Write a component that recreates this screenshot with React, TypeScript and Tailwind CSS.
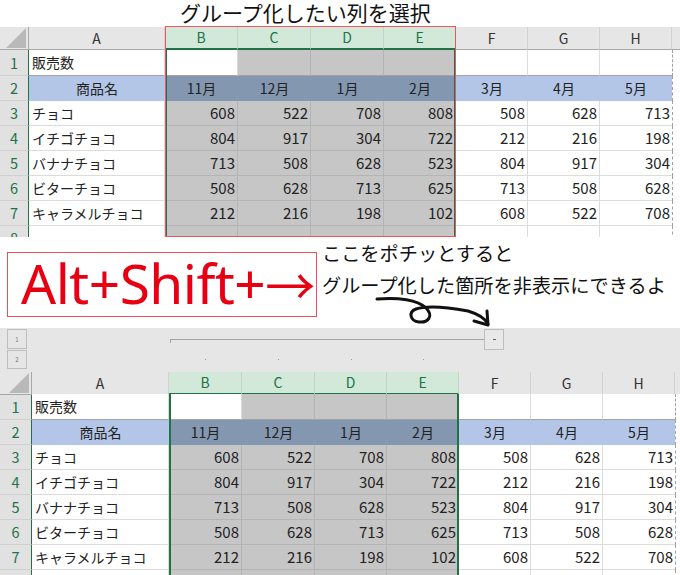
import React from "react";

// Two Excel-like sheets with a note about grouping columns in between.

const data: string[][] = [
  ["販売数", "", "", "", "", "", "", ""],
  ["商品名", "11月", "12月", "1月", "2月", "3月", "4月", "5月"],
  ["チョコ", "608", "522", "708", "808", "508", "628", "713"],
  ["イチゴチョコ", "804", "917", "304", "722", "212", "216", "198"],
  ["バナナチョコ", "713", "508", "628", "523", "804", "917", "304"],
  ["ビターチョコ", "508", "628", "713", "625", "713", "508", "628"],
  ["キャラメルチョコ", "212", "216", "198", "102", "608", "522", "708"],
  ["", "", "", "", "", "", "", ""],
];

const letters = ["A", "B", "C", "D", "E", "F", "G", "H"];

type SheetCfg = {
  cols: string;
  headH: string;
  rowH: string[];
  sel: string;
};

const sheet1: SheetCfg = {
  cols: "grid-cols-[29px_136px_73px_73px_73px_72px_72px_72px_72px_1fr]",
  headH: "h-[23px]",
  rowH: ["h-[26px]", "h-[25px]", "h-[25px]", "h-[25px]", "h-[25px]", "h-[25px]", "h-[25px]", "h-[11px]"],
  sel: "left-[165px] w-[291px] top-[23px]",
};

const sheet2: SheetCfg = {
  cols: "grid-cols-[32px_137px_73px_73px_72px_72px_72px_72px_72px_1fr]",
  headH: "h-[22px]",
  rowH: ["h-[26px]", "h-[25px]", "h-[25px]", "h-[25px]", "h-[25px]", "h-[25px]", "h-[25px]", "h-[5px]"],
  sel: "left-[169px] w-[290px] top-[22px]",
};

// cells keep their full height; the last row is clipped by its container
const cellH = ["h-[26px]", "h-[25px]", "h-[25px]", "h-[25px]", "h-[25px]", "h-[25px]", "h-[25px]", "h-[25px]"];

function cellClass(r: number, c: number) {
  const sel = c >= 1 && c <= 4;
  if (c === 8) return "bg-white border-l border-dashed border-[#a0a0a0]";
  const right = c === 7 ? "" : "border-r";
  if (r === 2) return sel ? "bg-[#8497b0]" : "bg-[#b4c6e7]";
  const bottom = r === 1 ? "border-b border-b-[#a4a4a4]" : "border-b";
  if (r === 1 && c === 1) return `bg-white ${right} ${bottom} border-[#dadada]`;
  if (sel) return `bg-[#c6c6c6] ${right} ${bottom} border-[#b4b4b4]`;
  return `bg-white ${right} ${bottom} border-[#dcdcdc]`;
}

function Sheet({ cfg }: { cfg: SheetCfg }) {
  return (
    <div className="relative">
      <div className={`grid ${cfg.cols} ${cfg.headH} text-[14px]`}>
        <div className="relative border-r border-b border-[#a8a8a8] bg-[#e6e6e6]">
          <svg className="absolute bottom-[1px] right-[2px]" width="20" height="20" viewBox="0 0 20 20">
            <polygon points="0,20 20,20 20,0" fill="#b9b9b9" />
          </svg>
        </div>
        {letters.map((l, i) => {
          const sel = i >= 1 && i <= 4;
          return (
            <div
              key={l}
              className={
                sel
                  ? "flex items-center justify-center border-r border-r-[#bcd8c6] border-b-2 border-b-[#217346] bg-[#d2e9da] text-[#217346]"
                  : "flex items-center justify-center border-r border-r-[#d2d2d2] border-b border-b-[#a8a8a8] bg-[#e6e6e6] text-[#333]"
              }
            >
              {l}
            </div>
          );
        })}
        <div className="border-b border-[#a8a8a8] bg-[#e6e6e6]" />
      </div>
      {data.map((row, ri) => {
        const r = ri + 1;
        return (
          <div key={r} className={`grid ${cfg.cols} ${cfg.rowH[ri]} items-start overflow-hidden`}>
            <div
              className={`flex ${cellH[ri]} items-center justify-center border-r border-r-[#217346] border-b border-b-[#cfcfcf] bg-[#e1e1e1] text-[14.5px] text-[#217346]`}
            >
              {r}
            </div>
            {row.map((v, c) => {
              const align =
                r === 2 ? "justify-center" : c === 0 ? "justify-start pl-[3px]" : "justify-end pr-[2px]";
              const size = c === 0 || r === 2 ? "text-[14px]" : "text-[15px]";
              return (
                <div
                  key={c}
                  className={`flex ${cellH[ri]} items-center whitespace-nowrap ${align} ${size} ${cellClass(r, c)}`}
                >
                  {v}
                </div>
              );
            })}
            <div className={`${cellH[ri]} ${cellClass(r, 8)}`} />
          </div>
        );
      })}
      <div className={`pointer-events-none absolute bottom-0 ${cfg.sel} border-x-2 border-[#217346]`} />
    </div>
  );
}

function Middle() {
  return (
    <div className="relative flex h-[91px]">
      <div className="ml-[7px] mt-[15px] flex h-[65px] w-[310px] items-center border-[1.5px] border-[#ea4f5c] pb-[4px] pl-[13px] text-[#e60012]">
        <span className="font-['Noto_Sans',sans-serif] text-[55px] leading-none tracking-[-0.5px]">Alt+Shift+</span>
        <span className="font-['Noto_Sans_CJK_JP',sans-serif] text-[50px] leading-none">→</span>
      </div>
      <div className="ml-[5px] text-[19.2px] leading-[32px] text-[#111]">
        <p>ここをポチッとすると</p>
        <p>グループ化した箇所を非表示にできるよ</p>
      </div>
      <svg className="pointer-events-none absolute left-0 top-0" width="680" height="95" viewBox="0 237 680 95">
        <path
          d="M377 299 C 398 297, 418 300, 426 308 C 434 316, 428 323, 419 322 C 410 321, 408 312, 416 309 C 428 305, 452 308, 468 311 C 478 314, 485 318, 488 324"
          fill="none"
          stroke="#111"
          strokeWidth="3"
          strokeLinecap="round"
        />
        <path d="M474 321 L488 325 L487 311" fill="none" stroke="#111" strokeWidth="3" strokeLinecap="round" strokeLinejoin="round" />
      </svg>
    </div>
  );
}

function GroupBar() {
  return (
    <div className="relative h-[44px] bg-[#e6e6e6]">
      <div className="absolute left-[7px] top-[1px] flex h-[20px] w-[20px] items-center justify-center border border-[#bdbdbd] text-[6px] text-[#777]">
        1
      </div>
      <div className="absolute left-[7px] top-[22px] flex h-[19px] w-[20px] items-center justify-center border border-[#bdbdbd] text-[6px] text-[#777]">
        2
      </div>
      <div className="absolute left-[170px] top-[11px] h-[1px] w-[314px] bg-[#a4a4a4]" />
      <div className="absolute left-[170px] top-[11px] h-[4px] w-[1px] bg-[#a4a4a4]" />
      <div className="absolute left-[484px] top-[1px] flex h-[21px] w-[20px] items-center justify-center border border-[#bdbdbd] bg-[#e8e8e8]">
        <div className="h-[1px] w-[3px] bg-[#666]" />
      </div>
      <div className="absolute left-[205px] top-[31px] h-[1px] w-[1px] bg-[#999]" />
      <div className="absolute left-[278px] top-[31px] h-[1px] w-[1px] bg-[#999]" />
      <div className="absolute left-[351px] top-[31px] h-[1px] w-[1px] bg-[#999]" />
      <div className="absolute left-[423px] top-[31px] h-[1px] w-[1px] bg-[#999]" />
    </div>
  );
}

export default function App() {
  return (
    <div className="h-[575px] w-[680px] overflow-hidden bg-white font-['Noto_Sans_CJK_JP',sans-serif] text-[#222]">
      <div className="h-[27px] pl-[180px] text-[21px] leading-[24px] text-[#111]">グループ化したい列を選択</div>
      <div className="relative">
        <Sheet cfg={sheet1} />
        <div className="pointer-events-none absolute left-[165px] top-[-1px] h-[211px] w-[291px] border-[1.5px] border-[#ec5561]" />
      </div>
      <Middle />
      <GroupBar />
      <Sheet cfg={sheet2} />
    </div>
  );
}
